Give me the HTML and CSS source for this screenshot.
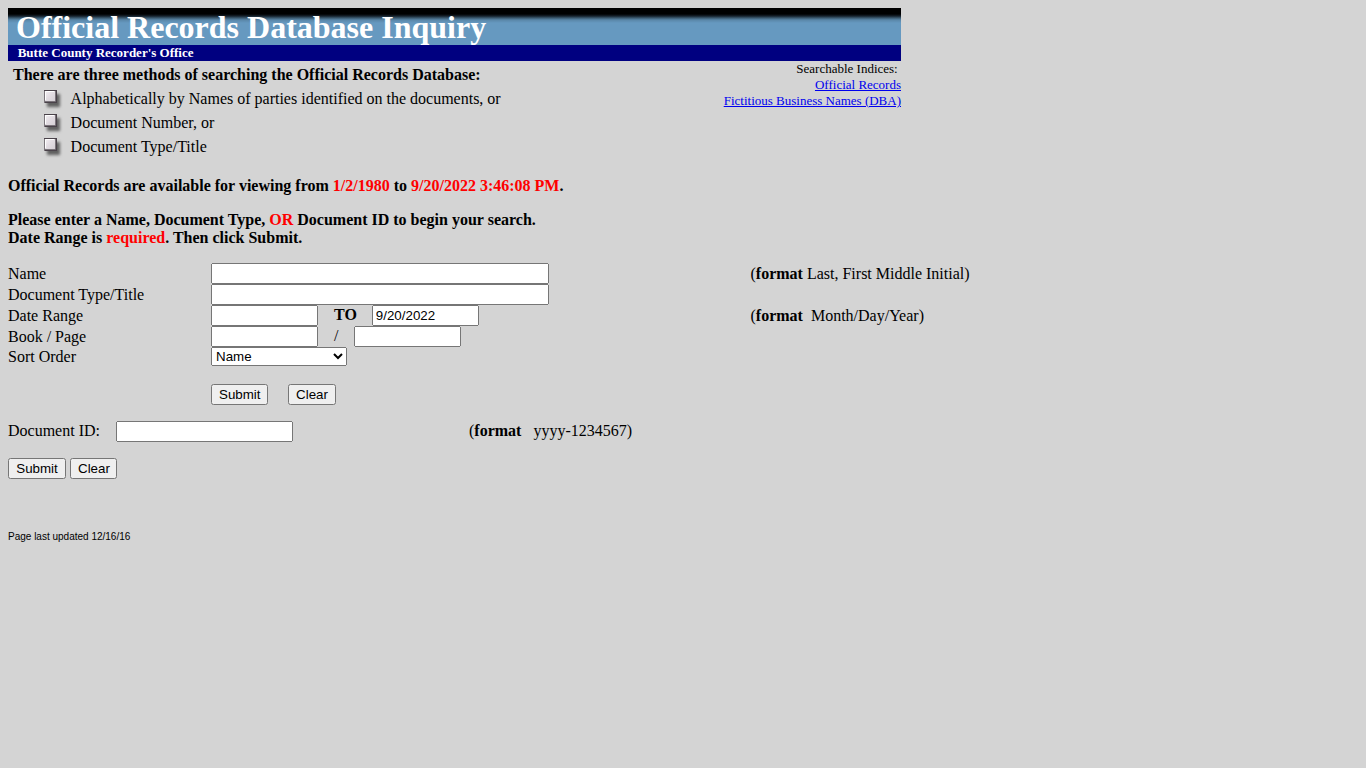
FILE: index.html
```html
<!DOCTYPE html>
<html lang="en">
<head>
    <meta charset="UTF-8">
    <title>Official Records Database Inquiry</title>
    <link rel="stylesheet" href="styles.css">
</head>
<body>
    <svg class="defs" width="0" height="0">
        <defs>
            <linearGradient id="face" x1="0" y1="0" x2="1" y2="1">
                <stop offset="0" stop-color="#f4f0f4"/>
                <stop offset="0.5" stop-color="#e2dce2"/>
                <stop offset="1" stop-color="#d6d0d6"/>
            </linearGradient>
            <filter id="soft" x="-50%" y="-50%" width="200%" height="200%">
                <feGaussianBlur stdDeviation="1.7"/>
            </filter>
            <symbol id="bullet" viewBox="0 0 20 20">
                <rect x="4" y="4" width="13" height="13" fill="#606060" filter="url(#soft)"/>
                <rect x="1" y="0" width="13" height="13" fill="#4a424a"/>
                <rect x="2" y="1" width="10" height="10" fill="url(#face)"/>
                <path d="M1.5 13V1" fill="none" stroke="#7b757b"/>
                <path d="M2.5 10V1.5H11" fill="none" stroke="#fff"/>
                <path d="M2 11.5H12.5V1" fill="none" stroke="#7b757b"/>
            </symbol>
        </defs>
    </svg>

    <div class="banner">
        <h1>Official Records Database Inquiry</h1>
        <div class="office">Butte County Recorder's Office</div>
    </div>

    <div class="intro">
        <div class="methods">
            <div class="methods-title">There are three methods of searching the Official Records Database:</div>
            <ul>
                <li><svg class="bullet"><use href="#bullet"/></svg>Alphabetically by Names of parties identified on the documents, or</li>
                <li><svg class="bullet"><use href="#bullet"/></svg>Document Number, or</li>
                <li><svg class="bullet"><use href="#bullet"/></svg>Document Type/Title</li>
            </ul>
        </div>
        <div class="indices">
            Searchable Indices:&nbsp;<br>
            <a href="#">Official Records</a><br>
            <a href="#">Fictitious Business Names (DBA)</a>
        </div>
    </div>

    <p class="notice">Official Records are available for viewing from <span class="red">1/2/1980</span> to <span class="red">9/20/2022 3:46:08 PM</span>.</p>
    <p class="notice">Please enter a Name, Document Type, <span class="red">OR</span> Document ID to begin your search.<br>
    Date Range is <span class="red">required</span>. Then click Submit.</p>

    <form class="search-form">
        <div class="row">
            <label for="name">Name</label>
            <div class="fields"><input type="text" id="name" class="long"></div>
            <div class="hint">(<b>format</b> Last, First Middle Initial)</div>
        </div>
        <div class="row">
            <label for="docType">Document Type/Title</label>
            <div class="fields"><input type="text" id="docType" class="long"></div>
        </div>
        <div class="row">
            <label for="dateFrom">Date Range</label>
            <div class="fields">
                <input type="text" id="dateFrom" class="short">
                <b class="sep to">TO</b>
                <input type="text" id="dateTo" class="short" value="9/20/2022">
            </div>
            <div class="hint">(<b>format</b>&nbsp; Month/Day/Year)</div>
        </div>
        <div class="row">
            <label for="book">Book / Page</label>
            <div class="fields">
                <input type="text" id="book" class="short">
                <span class="sep">/</span>
                <input type="text" id="page" class="short">
            </div>
        </div>
        <div class="row sort-row">
            <label for="sort">Sort Order</label>
            <div class="fields">
                <select id="sort">
                    <option>Name</option>
                    <option>Document Type</option>
                    <option>Date</option>
                </select>
            </div>
        </div>
        <div class="buttons">
            <input type="submit" class="submit" value="Submit">
            <input type="reset" class="clear" value="Clear">
        </div>
    </form>

    <form class="id-form">
        <div class="id-row">
            <label for="docId">Document ID:</label>
            <input type="text" id="docId">
            <div class="hint">(<b>format</b>&nbsp;&nbsp; yyyy-1234567)</div>
        </div>
        <div class="buttons">
            <input type="submit" class="submit" value="Submit">
            <input type="reset" class="clear" value="Clear">
        </div>
    </form>

    <div class="updated">Page last updated 12/16/16</div>
</body>
</html>
```
FILE: styles.css
```css
body {
    margin: 8px;
    background-color: #d4d4d4;
    color: #000;
    font-family: "Liberation Serif", "Times New Roman", serif;
    font-size: 16px;
    line-height: 18px;
}
.defs {
    display: block;
}
.banner {
    width: 893px;
    color: #fff;
}
h1 {
    box-sizing: border-box;
    height: 37px;
    margin: 0;
    padding: 1px 8px 0;
    background: linear-gradient(#000 0, #000 6px, #15202a 8px, #3c5a70 10px, #5a87a9 12px, #6699c0 15px);
    font-size: 32px;
    line-height: 36px;
}
.office {
    height: 16px;
    padding-left: 9.7px;
    background-color: #000080;
    font-size: 13px;
    font-weight: bold;
    line-height: 16px;
}
.intro {
    display: flex;
    justify-content: space-between;
    width: 893px;
    height: 116px;
}
.methods-title {
    padding: 5px 0 0 5px;
    font-weight: bold;
}
ul {
    margin: 3px 0 0;
    padding: 0 0 0 35px;
    list-style: none;
}
li {
    display: flex;
    height: 24px;
    line-height: 24px;
}
.bullet {
    width: 20px;
    height: 20px;
    margin-top: 3px;
    margin-right: 7.6px;
}
.indices {
    font-size: 13px;
    line-height: 16px;
    text-align: right;
}
.indices a {
    color: #0000ee;
}
.notice {
    margin: 0 0 16px;
    font-weight: bold;
}
.red {
    color: #f00;
}
input,
select {
    box-sizing: border-box;
    margin: 0;
    font-family: "Liberation Sans", Arial, sans-serif;
    font-size: 13.33px;
}
input[type="text"] {
    height: 21px;
    padding: 1px 2px;
}
.search-form {
    width: 1000px;
}
.row {
    display: grid;
    grid-template-columns: 203px 539.5px 1fr;
    height: 21px;
    line-height: 21px;
}
.row .hint {
    grid-column: 3;
}
.fields {
    display: flex;
}
.long {
    width: 338px;
}
.short {
    width: 107px;
}
.sep {
    margin: 0 16px;
    line-height: 19px;
}
.to {
    margin-right: 15px;
}
.sort-row {
    height: 19px;
    line-height: 19px;
}
select {
    width: 136px;
    height: 19px;
}
.buttons {
    display: flex;
}
.submit,
.clear {
    height: 21px;
    padding: 1px 6px;
}
.submit {
    width: 58px;
}
.clear {
    width: 48px;
}
.search-form .buttons {
    gap: 20px;
    padding: 18px 0 0 203px;
}
.search-form .submit {
    width: 57px;
}
.id-row {
    display: flex;
    height: 21px;
    margin: 16px 0;
    line-height: 19px;
}
.id-row label {
    width: 108px;
}
.id-row input {
    width: 177px;
    margin-right: 176px;
}
.id-form .buttons {
    gap: 4px;
}
.id-form .clear {
    width: 47px;
}
.updated {
    margin-top: 52px;
    font-family: "Liberation Sans", Arial, sans-serif;
    font-size: 10px;
    line-height: 12px;
}
```
